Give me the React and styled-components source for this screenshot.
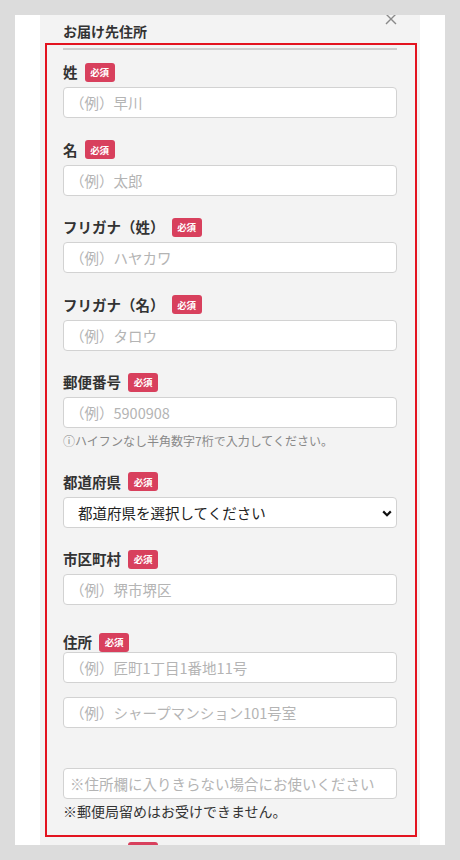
import React from "react";
import styled, { createGlobalStyle } from "styled-components";

const GlobalStyle = createGlobalStyle`
  * {
    box-sizing: border-box;
  }
  body {
    margin: 0;
    background: #dcdcdc;
    font-family: "Noto Sans CJK JP", "Noto Sans", sans-serif;
    color: #333;
  }
`;

const Page = styled.div`
  height: 860px;
  padding: 15px;
  overflow: hidden;
`;

const Sheet = styled.div`
  width: 430px;
  height: 830px;
  background: #fff;
  padding: 0 25px;
`;

const Panel = styled.div`
  position: relative;
  height: 100%;
  background: #f3f3f3;
  padding: 0 23px 0 23px;
  overflow: hidden;
`;

const Close = styled.button`
  position: absolute;
  top: -2px;
  right: 23px;
  width: 12px;
  height: 12px;
  padding: 0;
  border: none;
  background: none;
  color: #8a8a8a;
  svg {
    display: block;
  }
`;

const Header = styled.div`
  padding: 6px 0 7px;
  border-bottom: 2px solid #cdcdcd;
`;

const Title = styled.h2`
  margin: 0;
  font-size: 14px;
  line-height: 20px;
  font-weight: 700;
  color: #333;
`;

const Form = styled.div`
  display: flex;
  flex-direction: column;
  gap: 21.5px;
  padding-top: 12px;
`;

const Field = styled.div`
  display: flex;
  flex-direction: column;
  margin-top: ${(props) => props.$extra || 0}px;
`;

const LabelRow = styled.div`
  display: flex;
  align-items: center;
  height: 20px;
  margin-bottom: ${(props) => (props.$tight ? 0 : 5)}px;
`;

const Label = styled.label`
  font-size: 14.5px;
  font-weight: 700;
  color: #333;
  line-height: 20px;
`;

const Badge = styled.span`
  display: inline-flex;
  align-items: center;
  justify-content: center;
  width: 30px;
  height: 19px;
  margin-left: 7px;
  border-radius: 3px;
  background: #d8405d;
  color: #fff;
  font-size: 9.5px;
  font-weight: 700;
  letter-spacing: -0.3px;
`;

const Input = styled.input`
  width: 100%;
  height: 31px;
  padding: 0 6px;
  margin-top: ${(props) => props.$gap || 0}px;
  border: 1px solid #d2d2d2;
  border-radius: 4px;
  background: #fff;
  font-family: inherit;
  font-size: 14.5px;
  color: #222;
  outline: none;
  &::placeholder {
    color: #b4b4b4;
  }
`;

const SelectWrap = styled.div`
  position: relative;
  svg {
    position: absolute;
    right: 5px;
    top: 13px;
    pointer-events: none;
  }
`;

const Select = styled.select`
  width: 100%;
  height: 31px;
  padding: 0 24px 0 14px;
  border: 1px solid #d2d2d2;
  border-radius: 4px;
  background: #fff;
  font-family: inherit;
  font-size: 14.5px;
  color: #222;
  appearance: none;
  outline: none;
`;

const Hint = styled.p`
  margin: 4px 0 0;
  font-size: 12px;
  line-height: 18px;
  color: #888;
`;

const Note = styled.p`
  margin: 3px 0 0;
  font-size: 14px;
  line-height: 18px;
  color: #333;
`;

const Highlight = styled.div`
  position: absolute;
  left: 5px;
  right: 3px;
  top: 28px;
  height: 794px;
  border: 2px solid #e3131f;
  pointer-events: none;
`;

const fields = [
  { label: "姓", placeholder: "（例）早川" },
  { label: "名", placeholder: "（例）太郎" },
  { label: "フリガナ（姓）", placeholder: "（例）ハヤカワ" },
  { label: "フリガナ（名）", placeholder: "（例）タロウ" },
];

function Required({ children, tight }) {
  return (
    <LabelRow $tight={tight}>
      <Label>{children}</Label>
      <Badge>必須</Badge>
    </LabelRow>
  );
}

export default function App() {
  return (
    <>
      <GlobalStyle />
      <Page>
        <Sheet>
          <Panel>
            <Close aria-label="閉じる">
              <svg width="12" height="12" viewBox="0 0 12 12">
                <path d="M1 1L11 11M11 1L1 11" stroke="currentColor" strokeWidth="1.4" />
              </svg>
            </Close>
            <Header>
              <Title>お届け先住所</Title>
            </Header>
            <Form>
              {fields.map((f) => (
                <Field key={f.label}>
                  <Required>{f.label}</Required>
                  <Input placeholder={f.placeholder} />
                </Field>
              ))}
              <Field>
                <Required>郵便番号</Required>
                <Input placeholder="（例）5900908" />
                <Hint>ⓘハイフンなし半角数字7桁で入力してください。</Hint>
              </Field>
              <Field>
                <Required>都道府県</Required>
                <SelectWrap>
                  <Select defaultValue="">
                    <option value="">都道府県を選択してください</option>
                  </Select>
                  <svg width="10" height="7" viewBox="0 0 10 7">
                    <path d="M1.2 1.4L5 5.2L8.8 1.4" fill="none" stroke="#111" strokeWidth="2.2" />
                  </svg>
                </SelectWrap>
              </Field>
              <Field>
                <Required>市区町村</Required>
                <Input placeholder="（例）堺市堺区" />
              </Field>
              <Field $extra={5.5}>
                <Required tight>住所</Required>
                <Input placeholder="（例）匠町1丁目1番地11号" />
                <Input $gap={14} placeholder="（例）シャープマンション101号室" />
                <Input $gap={40} placeholder="※住所欄に入りきらない場合にお使いください" />
                <Note>※郵便局留めはお受けできません。</Note>
              </Field>
              <Field>
                <Required>電話番号</Required>
                <Input placeholder="（例）0722821111" />
              </Field>
            </Form>
            <Highlight />
          </Panel>
        </Sheet>
      </Page>
    </>
  );
}
